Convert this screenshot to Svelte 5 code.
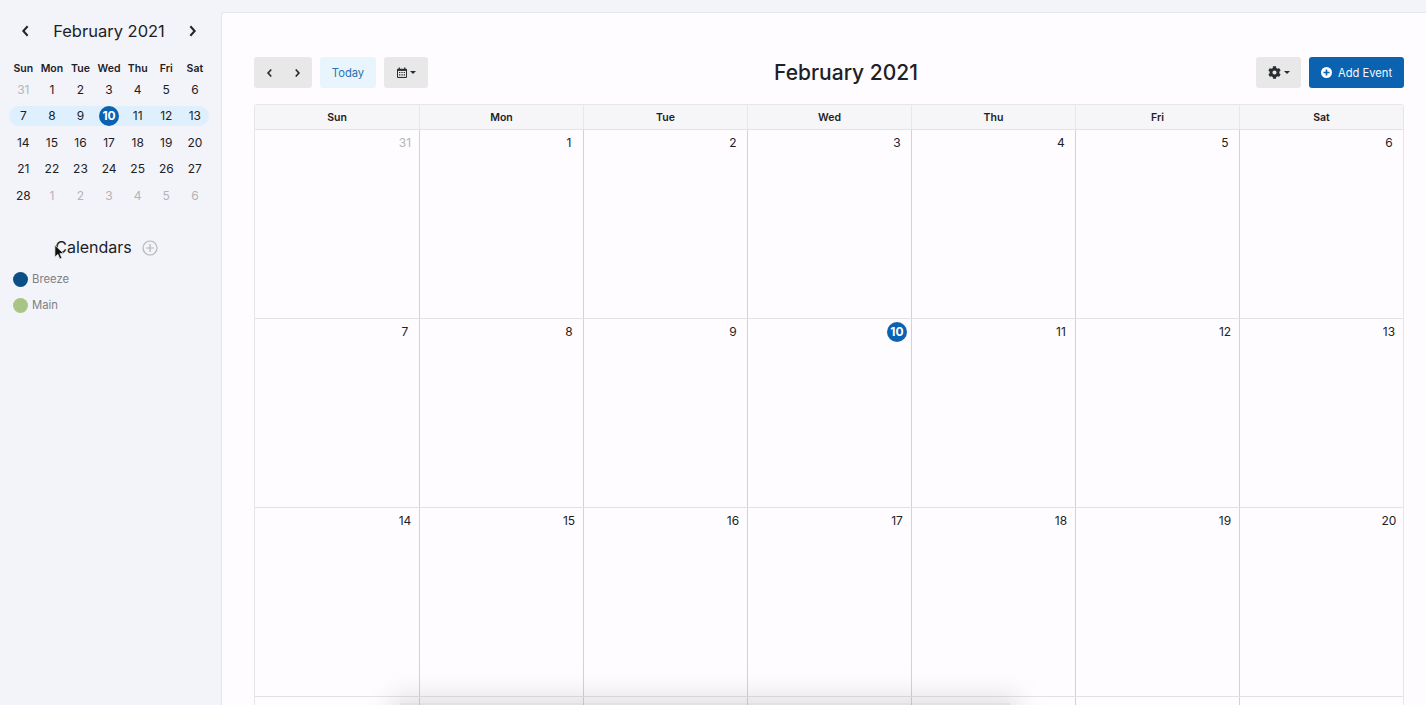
<script>
	const dayNames = ['Sun', 'Mon', 'Tue', 'Wed', 'Thu', 'Fri', 'Sat'];

	// day number + whether it falls outside February
	const weeks = [
		[[31, true], [1], [2], [3], [4], [5], [6]],
		[[7], [8], [9], [10], [11], [12], [13]],
		[[14], [15], [16], [17], [18], [19], [20]],
		[[21], [22], [23], [24], [25], [26], [27]],
		[[28], [1, true], [2, true], [3, true], [4, true], [5, true], [6, true]]
	];

	const bigWeeks = weeks.slice(0, 3);

	const calendars = [
		{ name: 'Breeze', color: '#0b4f84' },
		{ name: 'Main', color: '#a9c585' }
	];
</script>

<div class="page">
	<aside class="sidebar">
		<div class="mini-head">
			<button class="mini-nav" aria-label="Previous month">
				<svg viewBox="0 0 10 14" width="9" height="12"><path d="M7.5 1.5 2.5 7l5 5.5" /></svg>
			</button>
			<span class="mini-title">February 2021</span>
			<button class="mini-nav" aria-label="Next month">
				<svg viewBox="0 0 10 14" width="9" height="12"><path d="M2.5 1.5 7.5 7l-5 5.5" /></svg>
			</button>
		</div>

		<div class="mini-grid mini-names">
			{#each dayNames as name}
				<span>{name}</span>
			{/each}
		</div>

		{#each weeks as week, w}
			<div class="mini-grid mini-week" class:active={w === 1}>
				{#each week as [day, muted]}
					<span class="mini-day" class:muted class:today={w === 1 && day === 10}>{day}</span>
				{/each}
			</div>
		{/each}

		<div class="cal-head">
			<span class="cal-title">Calendars</span>
			<svg class="cal-add" viewBox="0 0 16 16" width="16" height="16">
				<circle cx="8" cy="8" r="7" />
				<path d="M8 4v8M4 8h8" />
			</svg>
		</div>

		<ul class="cal-list">
			{#each calendars as cal}
				<li>
					<span class="dot" style="background: {cal.color}"></span>
					{cal.name}
				</li>
			{/each}
		</ul>
	</aside>

	<main class="content">
		<div class="toolbar">
			<div class="toolbar-group">
				<div class="btn btn-gray nav-group">
					<svg viewBox="0 0 10 14" width="7" height="10"><path d="M7.5 2 3 7l4.5 5" /></svg>
					<svg viewBox="0 0 10 14" width="7" height="10"><path d="M2.5 2 7 7l-4.5 5" /></svg>
				</div>
				<div class="btn btn-today">Today</div>
				<div class="btn btn-gray btn-icon">
					<svg class="cal-icon" viewBox="0 0 12 13" width="10" height="11">
						<path d="M2 0.5h1.5V2h5V0.5H10V2h1a1 1 0 0 1 1 1v9a1 1 0 0 1-1 1H1a1 1 0 0 1-1-1V3a1 1 0 0 1 1-1h1z" />
						<rect x="1.2" y="4.6" width="9.6" height="7.2" fill="#e9e9ea" />
						<path d="M2.4 5.8h1.6v1.4H2.4zM5.2 5.8h1.6v1.4H5.2zM8 5.8h1.6v1.4H8zM2.4 8.6h1.6V10H2.4zM5.2 8.6h1.6V10H5.2zM8 8.6h1.6V10H8z" />
					</svg>
					<span class="caret"></span>
				</div>
			</div>

			<h1>February 2021</h1>

			<div class="toolbar-group">
				<div class="btn btn-gray btn-icon btn-gear">
					<svg viewBox="0 0 512 512" width="13" height="13">
						<path d="M487.4 315.7l-42.6-24.6c4.3-23.2 4.3-47 0-70.2l42.6-24.6c4.9-2.8 7.1-8.6 5.5-14-11.1-35.6-30-67.8-54.7-94.6-3.8-4.1-10-5.1-14.8-2.3L380.8 110c-17.9-15.4-38.5-27.3-60.8-35.1V25.8c0-5.6-3.9-10.5-9.4-11.7-36.7-8.2-74.3-7.8-109.2 0-5.5 1.2-9.4 6.1-9.4 11.7V75c-22.2 7.9-42.8 19.8-60.8 35.1L88.7 85.5c-4.9-2.8-11-1.9-14.8 2.3-24.7 26.7-43.6 58.9-54.7 94.6-1.7 5.4.6 11.2 5.5 14L67.3 221c-4.3 23.2-4.3 47 0 70.2l-42.6 24.6c-4.9 2.8-7.1 8.6-5.5 14 11.1 35.6 30 67.8 54.7 94.6 3.8 4.1 10 5.1 14.8 2.3l42.6-24.6c17.9 15.4 38.5 27.3 60.8 35.1v49.2c0 5.6 3.9 10.5 9.4 11.7 36.7 8.2 74.3 7.8 109.2 0 5.5-1.2 9.4-6.1 9.4-11.7v-49.2c22.2-7.9 42.8-19.8 60.8-35.1l42.6 24.6c4.9 2.8 11 1.9 14.8-2.3 24.7-26.7 43.6-58.9 54.7-94.6 1.5-5.5-.7-11.3-5.6-14.1zM256 336c-44.1 0-80-35.9-80-80s35.9-80 80-80 80 35.9 80 80-35.9 80-80 80z" />
					</svg>
					<span class="caret"></span>
				</div>
				<div class="btn btn-add">
					<svg viewBox="0 0 16 16" width="11" height="11">
						<circle cx="8" cy="8" r="8" fill="#fff" />
						<path d="M8 3.6v8.8M3.6 8h8.8" stroke="#0a62b0" stroke-width="2.4" />
					</svg>
					Add Event
				</div>
			</div>
		</div>

		<div class="month">
			<div class="month-head">
				{#each dayNames as name}
					<div class="head-cell">{name}</div>
				{/each}
			</div>
			{#each bigWeeks as week, w}
				<div class="month-row">
					{#each week as [day, muted]}
						<div class="cell">
							<span class="cell-day" class:muted class:today={w === 1 && day === 10}>{day}</span>
						</div>
					{/each}
				</div>
			{/each}
			<!-- the fourth week starts right at the fold, its numbers are out of view -->
			<div class="month-row">
				{#each dayNames as name}
					<div class="cell"></div>
				{/each}
			</div>
		</div>
	</main>

	<div class="bottom-shade"></div>

	<svg class="cursor" viewBox="0 0 12 18" width="11" height="17">
		<path d="M1 1v13l3.2-3 2.2 5 2.2-1-2.2-4.8H10.5z" fill="#111" stroke="#e8e8e8" stroke-width="0.8" />
	</svg>
</div>

<style>
	:global(body) {
		margin: 0;
		background: #f2f4f9;
		overflow: hidden;
	}

	.page {
		position: relative;
		display: flex;
		height: 705px;
		overflow: hidden;
		font-family: Inter, 'Liberation Sans', sans-serif;
		color: #1d2126;
	}

	.sidebar {
		flex: 0 0 221px;
		box-sizing: border-box;
		padding: 18px 10px 0 9px;
	}

	.mini-head {
		display: flex;
		align-items: center;
		justify-content: space-between;
		height: 26px;
		padding: 0 14px 0 12px;
	}

	.mini-nav {
		display: flex;
		padding: 0;
		border: 0;
		background: none;
	}

	.mini-nav path {
		fill: none;
		stroke: #23272b;
		stroke-width: 2.4;
	}

	.mini-title {
		font-size: 16.5px;
	}

	.mini-grid {
		display: grid;
		grid-template-columns: repeat(7, 28.6px);
		justify-items: center;
		align-items: center;
		width: 200px;
	}

	.mini-names {
		height: 18px;
		margin-top: 15px;
		font-size: 10.5px;
		font-weight: 600;
	}

	.mini-week {
		height: 20px;
		margin-top: 6.5px;
		font-size: 12px;
		border-radius: 10px;
	}

	.mini-names + .mini-week {
		margin-top: 2px;
	}

	.mini-week.active {
		background: #def0fd;
	}

	.mini-day.muted {
		color: #b3b5b8;
	}

	.mini-day.today {
		width: 20px;
		height: 20px;
		border-radius: 50%;
		background: #0a62b0;
		color: #fff;
		font-weight: 700;
		line-height: 20px;
		text-align: center;
	}

	.cal-head {
		display: flex;
		align-items: center;
		justify-content: center;
		gap: 10px;
		margin: 29px 7px 0 0;
		height: 26px;
	}

	.cal-title {
		font-size: 16px;
	}

	.cal-add {
		margin-top: 2px;
	}

	.cal-add circle,
	.cal-add path {
		fill: none;
		stroke: #b3b5b8;
		stroke-width: 1.2;
	}

	.cal-list {
		list-style: none;
		margin: 6px 0 0;
		padding: 0 0 0 4px;
		font-size: 11.3px;
		color: #7e8084;
	}

	.cal-list li {
		display: flex;
		align-items: center;
		gap: 4px;
		height: 26px;
	}

	.dot {
		width: 15px;
		height: 15px;
		border-radius: 50%;
	}

	.content {
		flex: 1;
		box-sizing: border-box;
		margin-top: 12px;
		padding: 44px 22px 0 32px;
		min-width: 0;
		background: #fefcfe;
		border: 1px solid #dfe8ef;
		border-width: 1px 0 0 1px;
		border-top-left-radius: 3px;
	}

	.toolbar {
		display: flex;
		justify-content: space-between;
		align-items: center;
		height: 31px;
	}

	.toolbar-group {
		display: flex;
		gap: 8px;
	}

	h1 {
		margin: 0 0 0 8px;
		font-size: 21px;
		font-weight: 500;
	}

	.btn {
		display: flex;
		align-items: center;
		justify-content: center;
		height: 31px;
		box-sizing: border-box;
		border-radius: 3px;
		font-size: 11.2px;
	}

	.btn-gray {
		background: #e8e8e9;
	}

	.nav-group {
		width: 58px;
		gap: 21px;
	}

	.nav-group path {
		fill: none;
		stroke: #2a2d30;
		stroke-width: 2.4;
	}

	.btn-today {
		width: 56px;
		background: #e8f5fd;
		color: #2a71b4;
	}

	.btn-icon {
		width: 44px;
		gap: 3px;
	}

	.btn-gear {
		width: 45px;
	}

	.cal-icon path,
	.btn-gear path {
		fill: #2a2d30;
	}

	.caret {
		width: 0;
		height: 0;
		border: 3.5px solid transparent;
		border-top-color: #2a2d30;
		border-bottom-width: 0;
	}

	.btn-add {
		width: 95px;
		gap: 6px;
		background: #0a62b0;
		color: #f3f8fc;
	}

	.month {
		margin-top: 16px;
		border: 1px solid #e6e6e8;
		border-bottom: 0;
		border-radius: 3px 3px 0 0;
	}

	.month-head {
		display: grid;
		grid-template-columns: repeat(7, 1fr);
		height: 24px;
		background: #f6f5f7;
		border-bottom: 1px solid #e4e4e6;
	}

	.head-cell {
		display: flex;
		align-items: center;
		justify-content: center;
		font-size: 10.5px;
		font-weight: 600;
		border-left: 1px solid #e8e8ea;
	}

	.head-cell:first-child {
		border-left: 0;
	}

	.month-row {
		display: grid;
		grid-template-columns: repeat(7, 1fr);
		height: 188px;
		border-bottom: 1px solid #e2e2e4;
	}

	.cell {
		display: flex;
		justify-content: flex-end;
		align-items: flex-start;
		padding: 3px 4px 0 0;
		border-left: 1px solid #d2d2d4;
	}

	.cell:first-child {
		border-left: 0;
	}

	/* number sits centred in a fixed box, so the today circle lines up */
	.cell-day {
		width: 20px;
		height: 20px;
		font-size: 12px;
		line-height: 20px;
		text-align: center;
	}

	.cell-day.muted {
		color: #b3b5b8;
	}

	.cell-day.today {
		border-radius: 50%;
		background: #0a62b0;
		color: #fff;
		font-weight: 700;
	}

	.bottom-shade {
		position: absolute;
		left: 400px;
		top: 703px;
		width: 610px;
		height: 30px;
		background: rgba(130, 130, 135, 0.22);
		box-shadow: 0 0 24px 8px rgba(130, 130, 135, 0.22);
		pointer-events: none;
	}

	.cursor {
		position: absolute;
		left: 54px;
		top: 244px;
	}
</style>
